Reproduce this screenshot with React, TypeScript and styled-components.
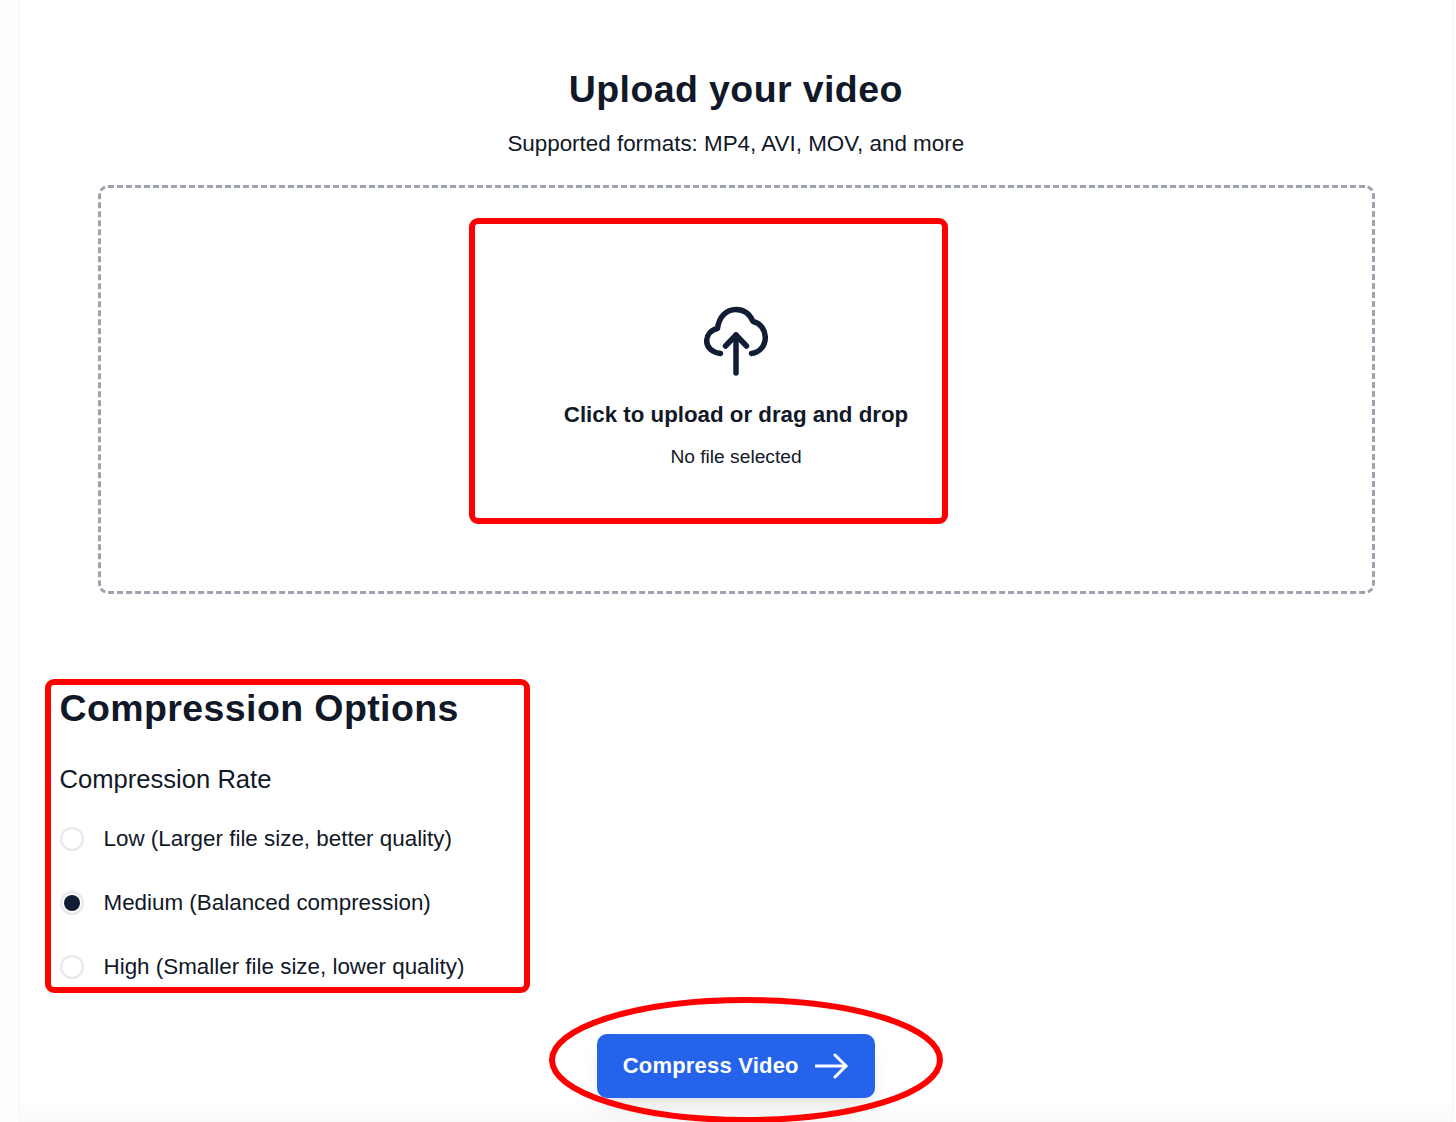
import React from "react";
import styled, { createGlobalStyle } from "styled-components";

const Global = createGlobalStyle`
  html, body { margin: 0; padding: 0; background: #fff; }
  body { font-family: "Liberation Sans", Arial, sans-serif; color: #111827; }
`;

const Page = styled.div`
  position: relative;
  width: 1456px;
  height: 1122px;
  overflow: hidden;
  box-sizing: border-box;
  padding: 0 4px 0 20px;
  background: #fefefe;
`;

const Card = styled.main`
  background: linear-gradient(#fff 1100px, #fafafa 1122px);
  height: 1122px;
  box-sizing: border-box;
  padding: 66px 40px 0 39.5px;
  display: flex;
  flex-direction: column;
  box-shadow: 0 0 3px rgba(0, 0, 0, 0.08);
`;

const Title = styled.h1`
  margin: 0;
  font-size: 37.5px;
  line-height: 47px;
  font-weight: 700;
  text-align: center;
  letter-spacing: 0.4px;
  color: #111827;
`;

const Subtitle = styled.p`
  margin: 18px 0 0;
  font-size: 22.4px;
  line-height: 26px;
  text-align: center;
  color: #111827;
`;

const Dropzone = styled.section`
  margin: 28px 37.5px 0 38px;
  height: 409px;
  box-sizing: border-box;
  border: 3px dashed #9ca3af;
  border-radius: 10px;
  display: flex;
  flex-direction: column;
  align-items: center;
  padding-top: 118px;
`;

const CloudIcon = styled.svg`
  width: 64px;
  height: 70px;
  display: block;
`;

const DropTitle = styled.div`
  margin-top: 25px;
  font-size: 22.3px;
  line-height: 28px;
  font-weight: 700;
`;

const DropHint = styled.div`
  margin-top: 17px;
  font-size: 19.2px;
  line-height: 22px;
`;

const Options = styled.section`
  margin-top: 91px;
  display: flex;
  flex-direction: column;
`;

const OptionsTitle = styled.h2`
  margin: 0;
  font-size: 37.5px;
  line-height: 46px;
  font-weight: 700;
  letter-spacing: 0.4px;
`;

const RateLabel = styled.div`
  margin-top: 33px;
  font-size: 25.6px;
  line-height: 30px;
`;

const RadioList = styled.div`
  margin-top: 30px;
  display: flex;
  flex-direction: column;
  gap: 34px;
`;

const RadioRow = styled.label`
  display: flex;
  align-items: center;
  gap: 20px;
  height: 30px;
  font-size: 22.4px;
`;

const RadioCircle = styled.span<{ $on?: boolean }>`
  width: 24px;
  height: 24px;
  box-sizing: border-box;
  border-radius: 50%;
  border: 2px solid #e5e7eb;
  background: #fff;
  display: flex;
  align-items: center;
  justify-content: center;
  &::after {
    content: "";
    width: 16px;
    height: 16px;
    border-radius: 50%;
    background: ${(p) => (p.$on ? "#111d35" : "transparent")};
  }
`;

const Actions = styled.div`
  margin-top: 52px;
  display: flex;
  justify-content: center;
`;

const CompressButton = styled.button`
  width: 278px;
  height: 64px;
  border: 0;
  border-radius: 10px;
  background: #2563eb;
  color: #fff;
  font-family: inherit;
  font-size: 22px;
  font-weight: 700;
  letter-spacing: 0.2px;
  display: flex;
  align-items: center;
  justify-content: center;
  gap: 16px;
  box-shadow: 0 14px 26px -6px rgba(0, 0, 0, 0.1), 0 4px 8px -4px rgba(0, 0, 0, 0.06);
`;

const ArrowIcon = styled.svg`
  width: 34px;
  height: 26px;
  display: block;
`;

const RedBox = styled.div<{ $x: number; $y: number; $w: number; $h: number }>`
  position: absolute;
  left: ${(p) => p.$x}px;
  top: ${(p) => p.$y}px;
  width: ${(p) => p.$w}px;
  height: ${(p) => p.$h}px;
  box-sizing: border-box;
  border: 6px solid #fe0000;
  border-radius: 9px;
  pointer-events: none;
`;

const RedEllipse = styled.svg`
  position: absolute;
  left: 546px;
  top: 994px;
  width: 400px;
  height: 128px;
  overflow: hidden;
  pointer-events: none;
`;

export default function App() {
  return (
    <Page>
      <Global />
      <Card>
        <Title>Upload your video</Title>
        <Subtitle>Supported formats: MP4, AVI, MOV, and more</Subtitle>
        <Dropzone>
          <CloudIcon viewBox="0 0 64 70" fill="none" stroke="#111d35" strokeWidth="5.5" strokeLinecap="round" strokeLinejoin="round">
            <path d="M16.500 47.500C8 46.500 2.700 41.500 2.700 35C2.700 29 7 24 13.500 22.500C15 11 22 3.500 32 3.500C40 3.500 46 8.500 49 15.500C56.500 17 61.300 24 61.300 31.500C61.300 40 55.500 46.500 47.500 47.500" />
            <path d="M32 67V29" />
            <path d="M21.500 40L32 29L42.500 40" />
          </CloudIcon>
          <DropTitle>Click to upload or drag and drop</DropTitle>
          <DropHint>No file selected</DropHint>
        </Dropzone>
        <Options>
          <OptionsTitle>Compression Options</OptionsTitle>
          <RateLabel>Compression Rate</RateLabel>
          <RadioList>
            <RadioRow><RadioCircle />Low (Larger file size, better quality)</RadioRow>
            <RadioRow><RadioCircle $on />Medium (Balanced compression)</RadioRow>
            <RadioRow><RadioCircle />High (Smaller file size, lower quality)</RadioRow>
          </RadioList>
        </Options>
        <Actions>
          <CompressButton>
            Compress Video
            <ArrowIcon viewBox="0 0 34 26" fill="none" stroke="#fff" strokeWidth="3" strokeLinecap="round" strokeLinejoin="round">
              <path d="M1 13H31" />
              <path d="M20 2L31 13L20 24" />
            </ArrowIcon>
          </CompressButton>
        </Actions>
      </Card>
      <RedBox $x={469} $y={218} $w={479} $h={306} />
      <RedBox $x={45} $y={679} $w={485} $h={314} />
      <RedEllipse viewBox="0 0 400 128" fill="none">
        <ellipse cx="200" cy="66" rx="194" ry="60" stroke="#fe0000" strokeWidth="6" />
      </RedEllipse>
    </Page>
  );
}
